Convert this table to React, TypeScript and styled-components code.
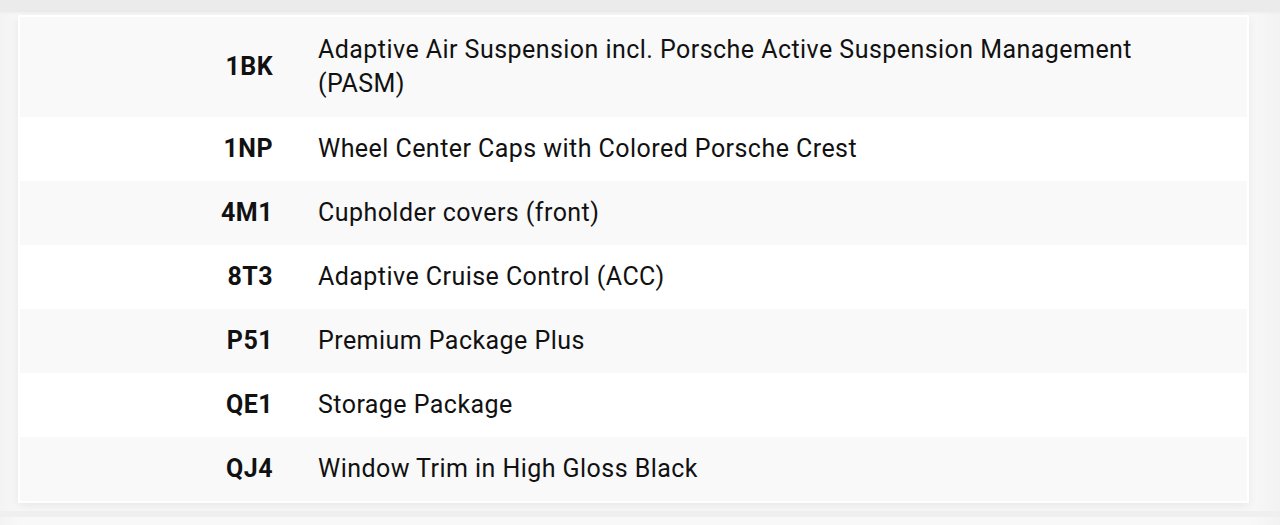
import React from 'react';
import styled, { createGlobalStyle } from 'styled-components';

const GlobalStyle = createGlobalStyle`
  html, body {
    margin: 0;
    padding: 0;
    background: #f5f5f5;
  }
  body {
    font-family: Roboto, "Liberation Sans", Arial, sans-serif;
    -webkit-font-smoothing: antialiased;
  }
`;

interface IOption {
  code: string;
  label: string;
}

const options: IOption[] = [
  {
    code: '1BK',
    label:
      'Adaptive Air Suspension incl. Porsche Active Suspension Management (PASM)',
  },
  { code: '1NP', label: 'Wheel Center Caps with Colored Porsche Crest' },
  { code: '4M1', label: 'Cupholder covers (front)' },
  { code: '8T3', label: 'Adaptive Cruise Control (ACC)' },
  { code: 'P51', label: 'Premium Package Plus' },
  { code: 'QE1', label: 'Storage Package' },
  { code: 'QJ4', label: 'Window Trim in High Gloss Black' },
];

const App = () => {
  return (
    <PageWrap>
      <GlobalStyle />
      <TopBand />
      <OptionsCard>
        {options.map((item, index) => (
          <OptionRow key={item.code} $striped={index % 2 === 0}>
            <CodeCell>{item.code}</CodeCell>
            <LabelCell>{item.label}</LabelCell>
          </OptionRow>
        ))}
      </OptionsCard>
      <BottomBand />
    </PageWrap>
  );
};

const PageWrap = styled.div`
  width: 1280px;
  height: 525px;
  overflow: hidden;
  background: linear-gradient(to right, #f3f3f3 0, #f8f8f8 20px, #f8f8f8 1250px, #f2f2f2 100%);
`;

const TopBand = styled.div`
  height: 12px;
  background: #ebebeb;
  box-shadow: 0 1px 3px rgba(0, 0, 0, 0.04);
`;

const BottomBand = styled.div`
  margin-top: 8px;
  height: 6px;
  background: #efefef;
`;

const OptionsCard = styled.div`
  margin: 3px 31px 0 18px;
  border: 2px solid #ffffff;
  background: #ffffff;
  box-shadow: 0 3px 10px rgba(0, 0, 0, 0.07);
  display: flex;
  flex-direction: column;
`;

const OptionRow = styled.div<{ $striped: boolean }>`
  display: grid;
  grid-template-columns: 275px 1fr;
  align-items: center;
  padding: 15px 0;
  background: ${(p) => (p.$striped ? '#f9f9f9' : '#ffffff')};
  color: #111111;
  font-size: 25px;
  line-height: 34px;
  letter-spacing: 0.45px;

  &:first-child {
    padding: 16px 0;
  }
`;

const CodeCell = styled.div`
  text-align: right;
  font-weight: 700;
  padding-right: 22px;
`;

const LabelCell = styled.div`
  padding-left: 23px;
  padding-right: 60px;
  font-weight: 400;
`;

export default App;
